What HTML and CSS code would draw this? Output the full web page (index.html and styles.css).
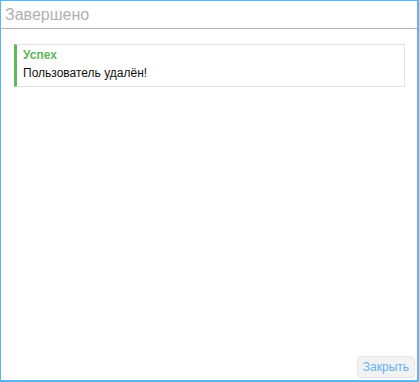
FILE: index.html
```html
<!DOCTYPE html>
<html lang="ru">
<head>
    <meta charset="UTF-8">
    <meta name="viewport" content="width=device-width, initial-scale=1.0">
    <title>Завершено</title>
    <link rel="stylesheet" href="styles.css">
</head>
<body>
    <div class="dialog">
        <div class="dialog-header">Завершено</div>

        <div class="dialog-body">
            <div class="alert alert-success">
                <div class="alert-title">Успех</div>
                <div class="alert-text">Пользователь удалён!</div>
            </div>
        </div>

        <div class="dialog-footer">
            <button type="button" class="btn-close">Закрыть</button>
        </div>
    </div>
</body>
</html>
```

FILE: styles.css
```css
html, body {
    margin: 0;
    padding: 0;
    background-color: white;
}

body {
    font-family: "Liberation Sans", Arial, sans-serif;
}

.dialog {
    width: 419px;
    height: 382px;
    box-sizing: border-box;
    display: flex;
    flex-direction: column;
    border: 1px solid #5ab6f3;
    border-right-width: 2px;
    border-bottom-width: 2px;
    background-color: white;
}

.dialog-header {
    height: 27px;
    line-height: 27px;
    padding-left: 4px;
    font-size: 16px;
    color: #b0b0b0;
    border-bottom: 1px solid #b3b3b3;
}

.dialog-body {
    flex: 1;
    padding: 15px 12px 0 13px;
}

.alert {
    border: 1px solid #e2e2e2;
    border-left: 3px solid #5cb85c;
    padding: 3px 6px 5px 6px;
}

.alert-title {
    font-size: 12px;
    font-weight: bold;
    line-height: 14px;
    color: #5cb85c;
}

.alert-text {
    margin-top: 4px;
    font-size: 12px;
    line-height: 15px;
    color: #111;
}

.dialog-footer {
    display: flex;
    justify-content: flex-end;
    padding: 0 2px 2px 0;
}

.btn-close {
    font-family: "Liberation Sans", Arial, sans-serif;
    font-size: 12px;
    color: #62b3f0;
    background-color: #f2f2f2;
    border: 1px solid #e6e6e6;
    border-radius: 4px;
    padding: 0 5px;
    height: 22px;
    cursor: pointer;
}
```
